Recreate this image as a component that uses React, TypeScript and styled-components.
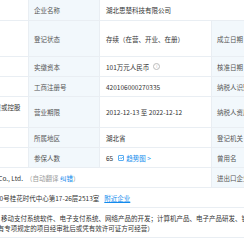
import React from 'react';
import styled, { createGlobalStyle } from 'styled-components';

const GlobalStyle = createGlobalStyle`
    html, body {
        margin: 0;
        padding: 0;
        overflow: hidden;
        background: #fff;
    }
`;

const Page = styled.div`
    width: 244px;
    height: 244px;
    overflow: hidden;
    font-family: "Noto Sans CJK SC", "Noto Sans", sans-serif;
    font-size: 6.5px;
    line-height: 10px;
    color: #333;
`;

// the info table is wider than the window, its first columns lie to the left
const Table = styled.div`
    display: grid;
    grid-template-columns: 71px 112px 71px 112px 71px 112px;
    width: 549px;
    margin-left: -154px;
`;

const Cell = styled.div<{ $span?: number; $h?: number }>`
    grid-column: span ${(p) => p.$span || 1};
    min-height: ${(p) => (p.$h ? `${p.$h - 1}px` : 'auto')};
    box-sizing: border-box;
    padding: 4.5px 6px;
    border-bottom: 1px solid #e9eef3;
    border-right: 1px solid #e9eef3;
    display: flex;
    align-items: center;
    white-space: nowrap;
`;

const Label = styled(Cell)`
    background: #f2f8fc;
    color: #555;
    padding-left: 5px;
`;

const Value = styled(Cell)<{ $wrap?: boolean }>`
    background: #fff;
    white-space: ${(p) => (p.$wrap ? 'normal' : 'nowrap')};
    line-break: ${(p) => (p.$wrap ? 'anywhere' : 'auto')};
`;

const Muted = styled.span`
    color: #999;
    margin-left: 3px;
`;

const LinkText = styled.a<{ $underline?: boolean }>`
    color: #128bed;
    text-decoration: ${(p) => (p.$underline ? 'underline' : 'none')};
    text-underline-offset: 1px;
    margin-left: ${(p) => (p.$underline ? '5px' : '0')};
`;

const InfoIcon = styled.span`
    display: inline-flex;
    align-items: center;
    justify-content: center;
    width: 5px;
    height: 5px;
    border: 0.8px solid #bbb;
    border-radius: 50%;
    color: #bbb;
    font-size: 4px;
    line-height: 5px;
    margin-left: 4px;
`;

const Trend = styled.span`
    display: inline-flex;
    align-items: center;
    gap: 2px;
    margin-left: 5px;
    color: #128bed;
`;

function TrendIcon() {
    return (
        <svg width="6" height="6" viewBox="0 0 12 12" fill="none" stroke="#128bed" strokeWidth="1.4">
            <rect x="1" y="1" width="10" height="10" rx="1" />
            <polyline points="3,8 5.5,5.5 7,7 9.5,4" />
        </svg>
    );
}

function App() {
    return (
        <Page>
            <GlobalStyle />
            <Table>
                <Label $h={22}>统一社会信用代码</Label>
                <Value $h={22}>91420100057XXXXX4R</Value>
                <Label $h={22}>企业名称</Label>
                <Value $h={22} $span={3}>湖北思楚科技有限公司</Value>

                <Label $h={37}>法定代表人</Label>
                <Value $h={37}>张伟</Value>
                <Label $h={37}>登记状态</Label>
                <Value $h={37}>存续（在营、开业、在册）</Value>
                <Label $h={37}>成立日期</Label>
                <Value $h={37}>2012-12-13</Value>

                <Label>注册资本</Label>
                <Value>101万元人民币</Value>
                <Label>实缴资本</Label>
                <Value>101万元人民币<InfoIcon>i</InfoIcon></Value>
                <Label>核准日期</Label>
                <Value>2019-06-18</Value>

                <Label>组织机构代码</Label>
                <Value>05XXXXX4-7</Value>
                <Label>工商注册号</Label>
                <Value>420106000270335</Value>
                <Label>纳税人识别号</Label>
                <Value>91420100057XXXXX4R</Value>

                <Label $h={32}>企业类型</Label>
                <Value $h={32} $wrap>有限责任公司（自然人投资或控股）</Value>
                <Label $h={32}>营业期限</Label>
                <Value $h={32}>2012-12-13 至 2022-12-12</Value>
                <Label $h={32}>纳税人资质</Label>
                <Value $h={32}>增值税一般纳税人</Value>

                <Label $h={19}>所属行业</Label>
                <Value $h={19}>软件和信息技术服务业</Value>
                <Label $h={19}>所属地区</Label>
                <Value $h={19}>湖北省</Value>
                <Label $h={19}>登记机关</Label>
                <Value $h={19}>武汉市武昌区市场监督管理局</Value>

                <Label>人员规模</Label>
                <Value>少于50人</Value>
                <Label>参保人数</Label>
                <Value>
                    65
                    <Trend>
                        <TrendIcon />
                        趋势图 &gt;
                    </Trend>
                </Value>
                <Label>曾用名</Label>
                <Value>-</Value>

                <Label>英文名</Label>
                <Value $span={3}>
                    Hubei SiChu Technology Co., Ltd.
                    <Muted>（自动翻译 <LinkText>纠错</LinkText>）</Muted>
                </Value>
                <Label>进出口企业代码</Label>
                <Value>-</Value>

                <Label>注册地址</Label>
                <Value $span={5}>
                    武汉市东湖新技术开发区 10号桂花时代中心第17-26层2513室
                    <LinkText $underline>附近企业</LinkText>
                </Value>

                <Label $h={29}>经营范围</Label>
                <Value $h={29} $span={5} $wrap>
                    计算机软硬件的技术开发；移动支付系统软件、电子支付系统、网络产品的开发；计算机产品、电子产品研发、销售；
                    <br />
                    办公用品批发零售。（国家有专项规定的项目经审批后或凭有效许可证方可经营）
                </Value>
            </Table>
        </Page>
    );
}

export default App;
